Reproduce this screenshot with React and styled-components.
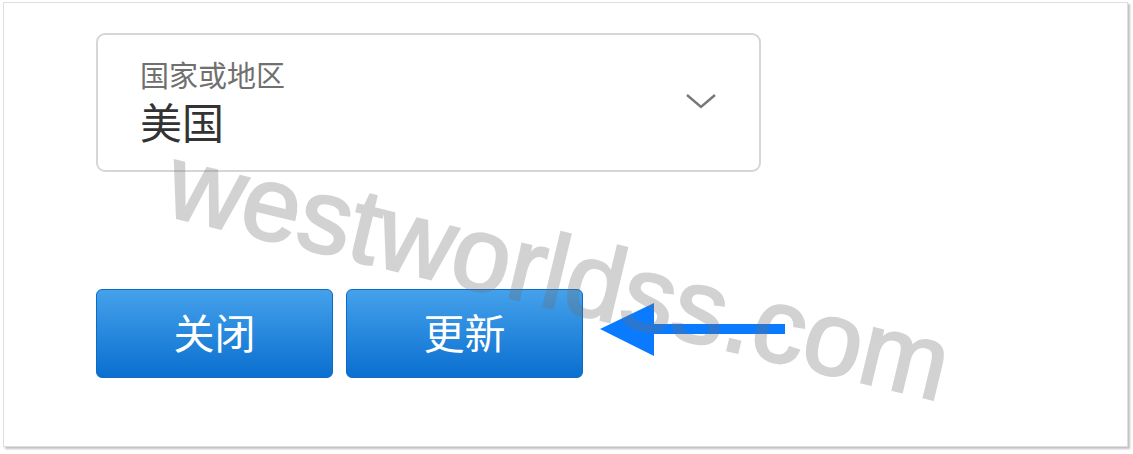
import styled, { createGlobalStyle } from "styled-components";

const Global = createGlobalStyle`
  html, body {
    margin: 0;
    background: #ffffff;
  }
  body {
    font-family: "Noto Sans CJK SC", "Noto Sans", sans-serif;
  }
`;

const Page = styled.div`
  position: relative;
  width: 1133px;
  height: 454px;
  padding: 2px 0 0 3px;
  box-sizing: border-box;
  overflow: hidden;
`;

const Card = styled.div`
  position: relative;
  width: 1125px;
  height: 445px;
  box-sizing: border-box;
  background: #fff;
  border: 1px solid #dedede;
  box-shadow: 2px 2px 2px rgba(0, 0, 0, 0.25);
  padding: 30px 0 0 92px;
  display: flex;
  flex-direction: column;
`;

const Select = styled.div`
  width: 665px;
  height: 139px;
  box-sizing: border-box;
  border: 2px solid #d6d6d6;
  border-radius: 9px;
  display: flex;
  align-items: center;
  justify-content: space-between;
  padding: 0 42px 0 42px;
`;

const Field = styled.div`
  display: flex;
  flex-direction: column;
  margin-top: -4px;
`;

const Label = styled.span`
  font-size: 29px;
  line-height: 36px;
  color: #707070;
`;

const Value = styled.span`
  margin-top: 4px;
  font-size: 42px;
  line-height: 50px;
  color: #333;
`;

const Chevron = styled.svg`
  width: 32px;
  height: 18px;
  margin-top: -4px;
`;

const Buttons = styled.div`
  display: flex;
  gap: 13px;
  margin-top: 117px;
  align-items: center;
`;

const Button = styled.button`
  width: 237px;
  height: 89px;
  box-sizing: border-box;
  border: 1px solid #0b6cc8;
  border-radius: 6px;
  background: linear-gradient(#45a1eb, #0a6fcf);
  color: #fff;
  font-family: "Noto Sans CJK SC", sans-serif;
  font-size: 41px;
  padding: 0 0 6px;
  cursor: pointer;
`;

const Arrow = styled.svg`
  align-self: flex-start;
  margin: 13px 0 0 4px;
  width: 186px;
  height: 54px;
`;

const Watermark = styled.div`
  position: absolute;
  left: 183px;
  top: 128px;
  transform: rotate(13.5deg);
  transform-origin: 0 0;
  font-family: "Liberation Sans", Arial, sans-serif;
  font-size: 105px;
  line-height: 1;
  color: #6e6e6e;
  -webkit-text-stroke: 2.5px #6e6e6e;
  opacity: 0.3;
  white-space: nowrap;
  pointer-events: none;
`;

export default function App() {
  return (
    <Page>
      <Global />
      <Card>
        <Select>
          <Field>
            <Label>国家或地区</Label>
            <Value>美国</Value>
          </Field>
          <Chevron viewBox="0 0 32 18">
            <path d="M2 3 L16 15 L30 3" fill="none" stroke="#777" strokeWidth="2.4" />
          </Chevron>
        </Select>
        <Buttons>
          <Button>关闭</Button>
          <Button>更新</Button>
          <Arrow viewBox="0 0 186 54">
            <polygon points="0,27 54,1 54,54" fill="#0a7bff" />
            <rect x="53" y="22" width="132" height="10" fill="#0a7bff" />
          </Arrow>
        </Buttons>
      </Card>
      <Watermark>westworldss.com</Watermark>
    </Page>
  );
}
